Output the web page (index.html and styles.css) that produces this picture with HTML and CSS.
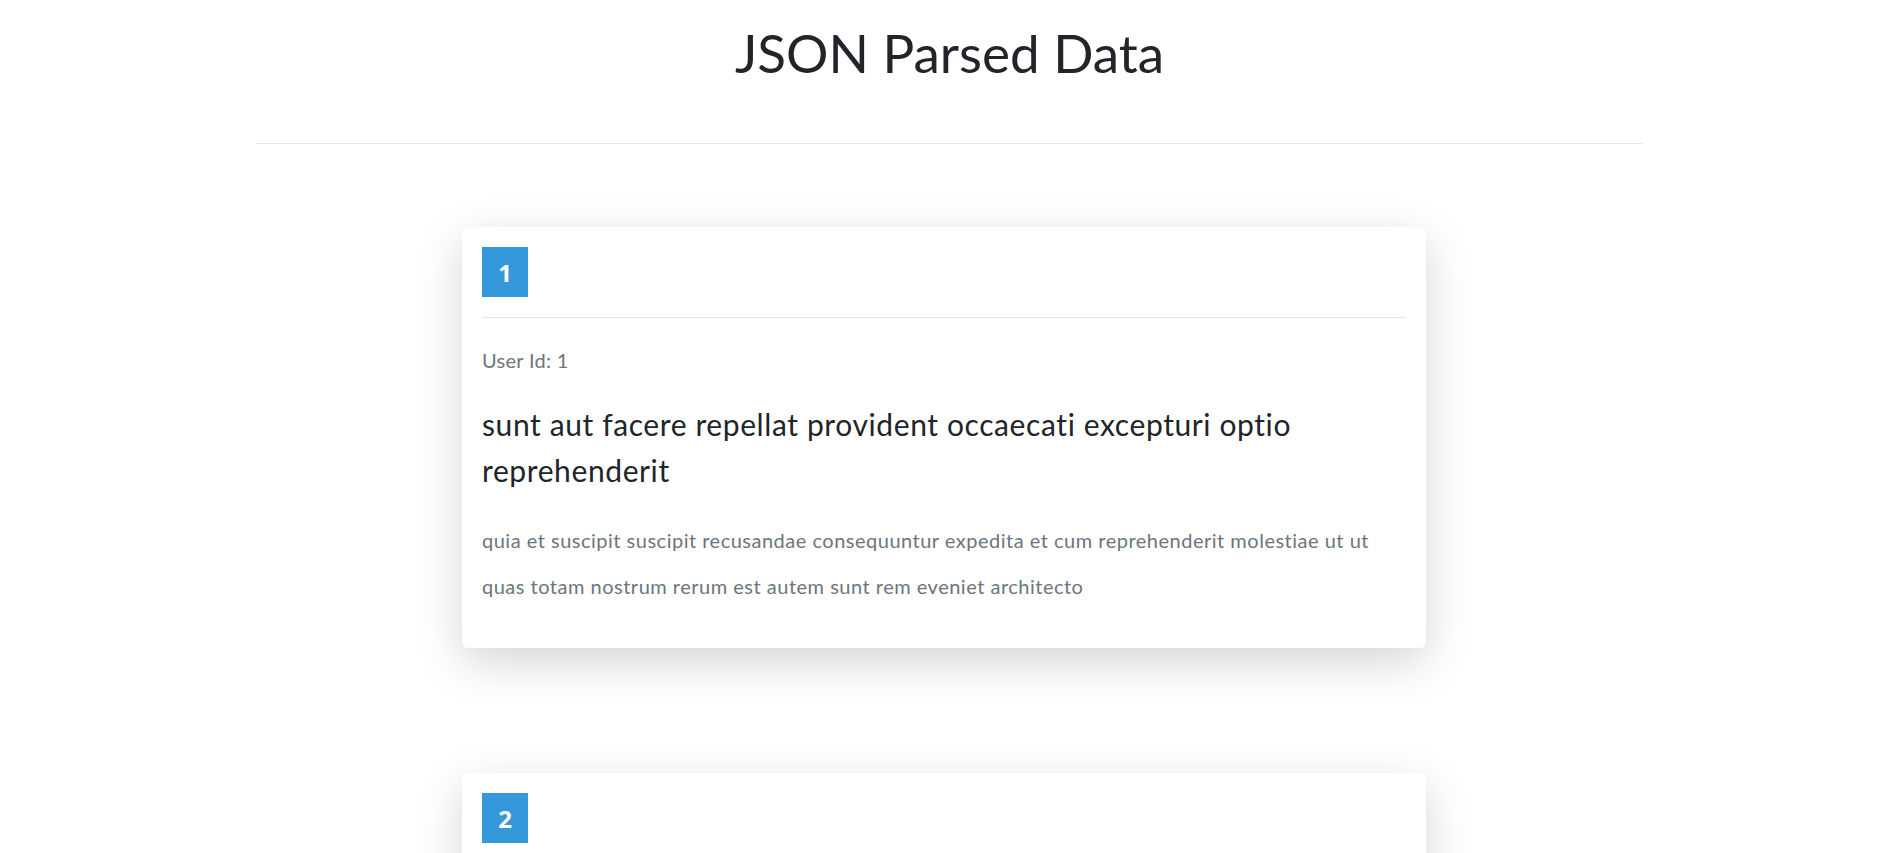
FILE: index.html
```html
<!DOCTYPE html>
<html lang="en">
<head>
<meta charset="utf-8">
<title>JSON Parsed Data</title>
<link rel="stylesheet" href="styles.css">
</head>
<body>
<header class="header">
  <h1 class="title">JSON Parsed Data</h1>
</header>
<main class="posts">
  <article class="card">
    <div class="badge">1</div>
    <hr class="divider">
    <p class="user">User Id: 1</p>
    <h4 class="post-title">sunt aut facere repellat provident occaecati excepturi optio reprehenderit</h4>
    <p class="post-body">quia et suscipit suscipit recusandae consequuntur expedita et cum reprehenderit molestiae ut ut quas totam nostrum rerum est autem sunt rem eveniet architecto</p>
  </article>
  <article class="card">
    <div class="badge">2</div>
    <hr class="divider">
    <p class="user">User Id: 1</p>
    <h4 class="post-title">qui est esse</h4>
    <p class="post-body">est rerum tempore vitae sequi sint nihil reprehenderit dolor beatae ea dolores neque fugiat blanditiis voluptate porro vel nihil molestiae ut reiciendis qui aperiam non debitis possimus qui neque nisi nulla</p>
  </article>
</main>
</body>
</html>
```

FILE: styles.css
```css
html, body {
  margin: 0;
  padding: 0;
  background: #ffffff;
}
body {
  font-family: Lato, "Open Sans", sans-serif;
  color: #212529;
  font-size: 19.2px;
}
.header {
  width: 1387px;
  margin-left: 256px;
  border-bottom: 1px solid #e5e5e5;
  padding-top: 21px;
  box-sizing: border-box;
  height: 144px;
}
.title {
  margin: 0;
  text-align: center;
  font-weight: 400;
  font-size: 53px;
  line-height: 64px;
  color: #212529;
}
.posts {
  display: flex;
  flex-direction: column;
  gap: 125px;
  padding-top: 83px;
  padding-bottom: 60px;
}
.card {
  width: 964px;
  margin-left: 462px;
  box-sizing: border-box;
  background: #ffffff;
  border-radius: 6px;
  padding: 20px 20px 39px;
  box-shadow: 0 14px 45px rgba(0, 0, 0, 0.17);
}
.badge {
  width: 46px;
  height: 50px;
  background: #3498db;
  color: #ffffff;
  font-family: "Open Sans", sans-serif;
  font-weight: 700;
  font-size: 24px;
  display: flex;
  align-items: center;
  justify-content: center;
}
.divider {
  border: 0;
  border-top: 1px solid #e3e3e3;
  margin: 20px 0 0;
}
.user {
  margin: 28px 0 0;
  font-size: 20px;
  line-height: 29px;
  letter-spacing: 0.3px;
  color: #6c757d;
}
.post-title {
  margin: 27px 0 0;
  font-weight: 400;
  font-size: 30px;
  line-height: 45.6px;
  letter-spacing: 0.6px;
  color: #212529;
}
.post-body {
  margin: 25px 0 0;
  font-size: 20px;
  line-height: 45.6px;
  letter-spacing: 0.5px;
  color: #6c757d;
}
```
